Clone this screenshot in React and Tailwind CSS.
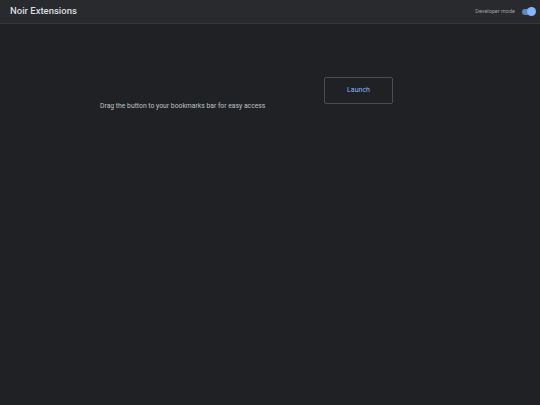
import React from 'react';

export default function App() {
  return (
    <div className="min-h-screen w-full bg-[#202124] text-[#e8eaed]" style={{ fontFamily: 'Roboto, "Noto Sans", sans-serif' }}>
      {/* Header */}
      <header className="flex h-[24px] items-center justify-between border-b border-[#35363a] bg-[#292a2d] pl-[10px] pr-[5px]">
        <h1 className="text-[9.5px] font-medium text-[#dadce0]">Noir Extensions</h1>
        <div className="flex items-center gap-[7px]">
          <span className="text-[5.5px] text-[#9aa0a6]">Developer mode</span>
          <div className="relative h-[6px] w-[13px] rounded-full bg-[#5e86c4]">
            <div className="absolute right-[-1px] top-[-1.5px] h-[9px] w-[9px] rounded-full bg-[#8ab4f8]" />
          </div>
        </div>
      </header>

      {/* Content */}
      <div className="flex pl-[100px] pt-[53px]">
        <p className="mt-[24px] w-[224px] text-[6.8px] leading-[10px] text-[#bdc1c6]">
          Drag the button to your bookmarks bar for easy access
        </p>
        <button className="flex h-[27px] w-[69px] items-center justify-center rounded-[2px] border border-[#4a4c50] bg-transparent text-[7px] font-normal text-[#8ab4f8]">
          Launch
        </button>
      </div>
    </div>
  );
}
